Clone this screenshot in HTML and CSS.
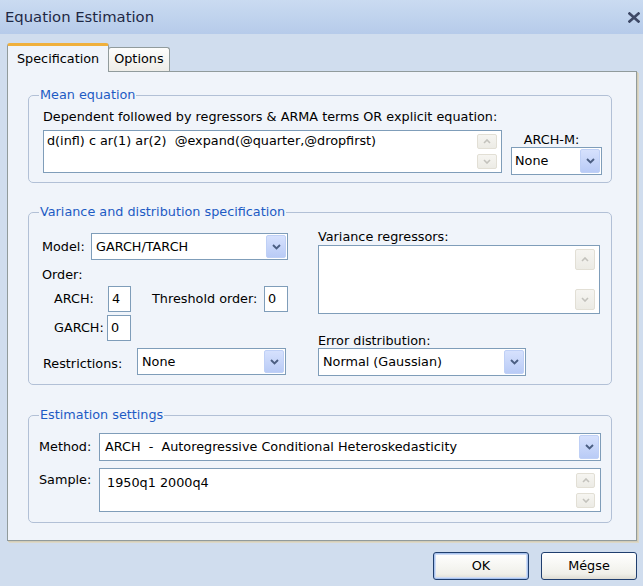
FILE: index.html
```html
<!DOCTYPE html>
<html>
<head>
<meta charset="utf-8">
<title>Equation Estimation</title>
<link rel="stylesheet" href="styles.css">
</head>
<body>
<div class="titlebar">
  <span class="title">Equation Estimation</span>
  <svg class="close" width="12" height="11" viewBox="0 0 12 11"><path d="M1.5 1.5 L10.5 9.5 M10.5 1.5 L1.5 9.5" stroke="#3d4866" stroke-width="2.6" stroke-linecap="square"/></svg>
</div>

<div class="tabs">
  <div class="tab active">Specification</div>
  <div class="tab">Options</div>
</div>

<div class="panel">
  <fieldset class="group group-mean">
    <legend>Mean equation</legend>
    <div class="mean-body">
      <div class="mean-main">
        <div class="caption">Dependent followed by regressors &amp; ARMA terms OR explicit equation:</div>
        <div class="memo memo-mean">
          <div class="memo-text">d(infl) c ar(1) ar(2)&nbsp; @expand(@quarter,@dropfirst)</div>
          <div class="scroll">
            <span class="sbtn"><svg width="8" height="5" viewBox="0 0 8 5"><path d="M1 4 L4 1 L7 4" fill="none" stroke="#c3c2bc" stroke-width="1.6"/></svg></span>
            <span class="sbtn"><svg width="8" height="5" viewBox="0 0 8 5"><path d="M1 1 L4 4 L7 1" fill="none" stroke="#c3c2bc" stroke-width="1.6"/></svg></span>
          </div>
        </div>
      </div>
      <div class="archm">
        <div class="archm-label">ARCH-M:</div>
        <div class="combo combo-archm">
          <span class="combo-text">None</span>
          <span class="drop"><svg width="9" height="6" viewBox="0 0 9 6"><path d="M1 1 L4.5 4.5 L8 1" fill="none" stroke="#4b5e82" stroke-width="1.9"/></svg></span>
        </div>
      </div>
    </div>
  </fieldset>

  <fieldset class="group group-var">
    <legend>Variance and distribution specification</legend>
    <div class="var-body">
      <div class="var-left">
        <div class="row row-model">
          <span class="lbl lbl-model">Model:</span>
          <div class="combo combo-model">
            <span class="combo-text">GARCH/TARCH</span>
            <span class="drop"><svg width="9" height="6" viewBox="0 0 9 6"><path d="M1 1 L4.5 4.5 L8 1" fill="none" stroke="#4b5e82" stroke-width="1.9"/></svg></span>
          </div>
        </div>
        <div class="order">Order:</div>
        <div class="row row-arch">
          <span class="lbl lbl-arch">ARCH:</span>
          <span class="edit edit-arch">4</span>
          <span class="lbl lbl-threshold">Threshold order:</span>
          <span class="edit edit-threshold">0</span>
        </div>
        <div class="row row-garch">
          <span class="lbl lbl-garch">GARCH:</span>
          <span class="edit edit-garch">0</span>
        </div>
        <div class="row row-restr">
          <span class="lbl lbl-restr">Restrictions:</span>
          <div class="combo combo-restr">
            <span class="combo-text">None</span>
            <span class="drop"><svg width="9" height="6" viewBox="0 0 9 6"><path d="M1 1 L4.5 4.5 L8 1" fill="none" stroke="#4b5e82" stroke-width="1.9"/></svg></span>
          </div>
        </div>
      </div>
      <div class="var-right">
        <div class="caption">Variance regressors:</div>
        <div class="memo memo-varreg">
          <div class="memo-text"></div>
          <div class="scroll">
            <span class="sbtn"><svg width="8" height="5" viewBox="0 0 8 5"><path d="M1 4 L4 1 L7 4" fill="none" stroke="#c3c2bc" stroke-width="1.6"/></svg></span>
            <span class="sbtn"><svg width="8" height="5" viewBox="0 0 8 5"><path d="M1 1 L4 4 L7 1" fill="none" stroke="#c3c2bc" stroke-width="1.6"/></svg></span>
          </div>
        </div>
        <div class="caption caption-err">Error distribution:</div>
        <div class="combo combo-err">
          <span class="combo-text">Normal (Gaussian)</span>
          <span class="drop"><svg width="9" height="6" viewBox="0 0 9 6"><path d="M1 1 L4.5 4.5 L8 1" fill="none" stroke="#4b5e82" stroke-width="1.9"/></svg></span>
        </div>
      </div>
    </div>
  </fieldset>

  <fieldset class="group group-est">
    <legend>Estimation settings</legend>
    <div class="est-body">
      <span class="lbl lbl-method">Method:</span>
      <div class="combo combo-method">
        <span class="combo-text">ARCH&nbsp; -&nbsp; Autoregressive Conditional Heteroskedasticity</span>
        <span class="drop"><svg width="9" height="6" viewBox="0 0 9 6"><path d="M1 1 L4.5 4.5 L8 1" fill="none" stroke="#4b5e82" stroke-width="1.9"/></svg></span>
      </div>
      <span class="lbl lbl-sample">Sample:</span>
      <div class="memo memo-sample">
        <div class="memo-text">1950q1 2000q4</div>
        <div class="scroll">
          <span class="sbtn"><svg width="8" height="5" viewBox="0 0 8 5"><path d="M1 4 L4 1 L7 4" fill="none" stroke="#c3c2bc" stroke-width="1.6"/></svg></span>
          <span class="sbtn"><svg width="8" height="5" viewBox="0 0 8 5"><path d="M1 1 L4 4 L7 1" fill="none" stroke="#c3c2bc" stroke-width="1.6"/></svg></span>
        </div>
      </div>
    </div>
  </fieldset>
</div>

<div class="buttons">
  <button class="btn btn-default">OK</button>
  <button class="btn">Mégse</button>
</div>
</body>
</html>
```

FILE: styles.css
```css
* { box-sizing: border-box; }

html, body { margin: 0; padding: 0; }

body {
  width: 643px;
  height: 586px;
  overflow: hidden;
  background: #d0ddee;
  font-family: "DejaVu Sans", Verdana, sans-serif;
  font-size: 12.8px;
  line-height: 16px;
  color: #000;
}

/* window caption */
.titlebar {
  height: 34px;
  display: flex;
  align-items: center;
  justify-content: space-between;
  padding: 0 3px 1px 5px;
  background: linear-gradient(#cadbf1, #b6cbea);
}
.title { font-size: 14.8px; color: #1e2844; }
.close { display: block; margin-top: 1px; }

/* tab strip */
.tabs {
  height: 37px;
  display: flex;
  align-items: flex-end;
  padding-left: 7px;
}
.tab {
  height: 24px;
  padding: 3px 5px 0 5px;
  border: 1px solid #919b9c;
  border-bottom: none;
  border-radius: 3px 3px 0 0;
  background: linear-gradient(#fdfdfc, #eeede8);
  margin-left: -1px;
}
.tab.active {
  position: relative;
  z-index: 1;
  height: 29px;
  margin-bottom: -1px;
  margin-left: 0;
  padding: 5px 9px 0 9px;
  border-top: 3px solid #f0b03c;
  background: #f0f4fa;
}

/* tab page */
.panel {
  width: 630px;
  height: 470px;
  margin-left: 7px;
  padding: 15px 0 0 20px;
  background: #f0f4fa;
  border: 1px solid #919b9c;
  box-shadow: 1px 1px 0 #d3cdb8, 2px 2px 0 #dcd8c8;
}

/* group boxes */
.group {
  width: 584px;
  margin: 0;
  padding: 0;
  border: 1px solid #b2c0d6;
  border-radius: 5px;
  min-width: 0;
}
.group legend {
  margin-left: 10px;
  padding: 0 1px;
  color: #1d5bc4;
  line-height: 16px;
}
.group-mean { height: 96px; }
.group-var { height: 181px; margin-top: 21px; }
.group-est { height: 116px; margin-top: 22px; }

/* shared controls */
.combo {
  display: flex;
  flex-shrink: 0;
  align-items: stretch;
  border: 1px solid #7f9db9;
  background: #fff;
}
.combo-text {
  flex: 1;
  display: flex;
  align-items: center;
  padding-left: 4px;
  white-space: nowrap;
  overflow: hidden;
}
.drop {
  width: 20px;
  margin: 1px;
  display: flex;
  align-items: center;
  justify-content: center;
  border: 1px solid #bfd0f6;
  border-radius: 2px;
  background: linear-gradient(#d6e1fd, #b9cbf6);
}
.drop svg { display: block; }

.memo {
  display: flex;
  border: 1px solid #7f9db9;
  background: #fff;
}
.memo-text { flex: 1; white-space: nowrap; }
.scroll {
  width: 24px;
  display: flex;
  flex-direction: column;
  justify-content: space-between;
  padding: 3px 4px 3px 0;
}
.sbtn {
  height: 15px;
  display: flex;
  align-items: center;
  justify-content: center;
  border: 1px solid #e2dfd5;
  border-radius: 2px;
  background: linear-gradient(#f6f5f1, #ecebe5);
}
.sbtn svg { display: block; }

.edit {
  display: flex;
  flex-shrink: 0;
  align-items: center;
  height: 26px;
  padding-left: 3px;
  border: 1px solid #7f9db9;
  background: #fff;
}

.row { display: flex; align-items: center; }
.lbl { white-space: nowrap; flex-shrink: 0; }

/* mean equation */
.mean-body {
  display: flex;
  height: 79px;
  padding: 6px 0 0 14px;
}
.mean-main { width: 459px; }
.memo-mean { height: 43px; margin-top: 5px; }
.memo-mean .memo-text { padding: 2px 3px; }
.archm {
  width: 91px;
  margin-left: 9px;
  padding-top: 24px;
}
.archm-label { text-align: center; line-height: 14px; padding-right: 10px; }
.combo-archm { height: 28px; }
.combo-archm .combo-text { padding-left: 3px; }

/* variance and distribution */
.var-body {
  display: flex;
  height: 164px;
  padding-left: 13px;
}
.var-left { width: 246px; padding-top: 13px; }
.var-right { width: 282px; margin-left: 30px; padding-top: 9px; }

.lbl-model { width: 49px; }
.combo-model { width: 197px; height: 27px; }
.order { margin-top: 7px; }
.row-arch { margin-top: 3px; }
.lbl-arch { width: 66px; padding-left: 12px; }
.edit-arch { width: 23px; }
.lbl-threshold { width: 112px; margin-left: 21px; }
.edit-threshold { width: 24px; }
.row-garch { margin-top: 3px; }
.lbl-garch { width: 65px; padding-left: 12px; }
.edit-garch { width: 24px; }
.row-restr { margin-top: 7px; }
.lbl-restr { width: 95px; padding-left: 1px; padding-top: 4px; }
.combo-restr { width: 149px; height: 27px; }

.memo-varreg { height: 69px; }
.memo-varreg .sbtn { height: 21px; }
.caption-err { margin-top: 20px; line-height: 14px; }
.combo-err { width: 208px; height: 28px; }

/* estimation settings */
.est-body {
  display: grid;
  grid-template-columns: 60px 502px;
  row-gap: 7px;
  padding: 10px 0 0 10px;
}
.lbl-method { align-self: center; }
.combo-method { height: 28px; }
.combo-method .combo-text { padding-left: 5px; }
.lbl-sample { padding-top: 4px; }
.memo-sample { height: 44px; }
.memo-sample .memo-text { padding: 6px 7px; }
.memo-sample .scroll { padding: 4px 5px 3px 0; }

/* dialog buttons */
.buttons {
  display: flex;
  justify-content: flex-end;
  gap: 12px;
  padding: 11px 6px 0 0;
}
.btn {
  width: 96px;
  height: 28px;
  font: inherit;
  color: #000;
  border: 1px solid #1f3e6e;
  border-radius: 3px;
  background: linear-gradient(#ffffff, #f0f0ea 80%, #dedcd3);
  padding: 0;
}
.btn-default {
  box-shadow: inset 0 0 0 1px #a8c3ee, inset 0 0 0 2px #cfdcf5;
}
```
